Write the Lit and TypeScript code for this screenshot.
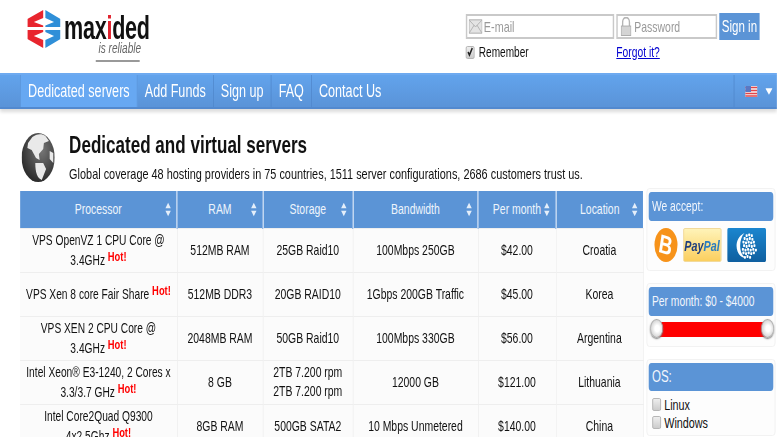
import { LitElement, html, css, svg } from "lit";
import { customElement } from "lit/decorators.js";

const rows: [string, boolean, string, string, string, string, string][] = [
  ["VPS OpenVZ 1 CPU Core @ 3.4GHz", true, "512MB RAM", "25GB Raid10", "100Mbps 250GB", "$42.00", "Croatia"],
  ["VPS Xen 8 core Fair Share", true, "512MB DDR3", "20GB RAID10", "1Gbps 200GB Traffic", "$45.00", "Korea"],
  ["VPS XEN 2 CPU Core @ 3.4GHz", true, "2048MB RAM", "50GB Raid10", "100Mbps 330GB", "$56.00", "Argentina"],
  ["Intel Xeon® E3-1240, 2 Cores x 3.3/3.7 GHz", true, "8 GB", "2TB 7.200 rpm\n2TB 7.200 rpm", "12000 GB", "$121.00", "Lithuania"],
  ["Intel Core2Quad Q9300 4x2.5Ghz", true, "8GB RAM", "500GB SATA2", "10 Mbps Unmetered", "$140.00", "China"],
];
const heads = ["Processor", "RAM", "Storage", "Bandwidth", "Per month", "Location"];
const colW = [218, 119, 125, 174, 108, 121];

const sortIcon = svg`<svg class="sort" viewBox="0 0 10 18" width="11" height="15"><path d="M5 1 9.500 7.500H.5Z M5 17 .5 10.500H9.500Z" fill="#e4eefa"/></svg>`;

/* White dots forming the WebMoney globe */
const wmDots: [number, number][] = [];
for (let a = 0; a < 6; a++) {
  for (let b = 0; b < 7; b++) {
    const x = 22 + a * 3.6 + (b % 2) * 1.2 - 0.4 * b;
    const y = 5.500 + b * 3.6 + (a % 2) * 0.8;
    const dx = x - 27, dy = y - 17;
    if (dx * dx + dy * dy < 150) wmDots.push([x, y]);
  }
}

@customElement("app-root")
export class AppRoot extends LitElement {
  static styles = css`
    :host { display: block; width: 777px; height: 437px; overflow: hidden; background: #fff; }
    .page { width: 1079px; height: 437px; transform: scaleX(.72); transform-origin: 0 0; font-family: "Liberation Sans", Arial, sans-serif; color: #111; font-size: 14px; filter: blur(.35px); }
    header { height: 73px; display: flex; justify-content: space-between; box-sizing: border-box; padding: 10px 0 0 38px; }
    .logo { display: flex; gap: 5px; height: 54px; }
    .wordmark { display: flex; flex-direction: column; align-items: flex-end; width: 122px; }
    .name { font-size: 34px; font-weight: 700; line-height: 28px; color: #111; margin-top: 3px; width: 122px; white-space: nowrap; letter-spacing: -.4px; transform: scaleX(.88); transform-origin: 0 0; }
    .name b { color: #e0242f; }
    .tag { font-size: 14px; font-style: italic; line-height: 14px; color: #666; margin-right: 15px; }
    .rule { width: 61px; height: 2px; background: #999; margin: 5px 17px 0 0; }
    .login { width: 432px; padding-top: 3px; }
    .fields { display: flex; gap: 3px; align-items: center; height: 27px; }
    .field { box-sizing: border-box; height: 25px; border: 2px solid #c9c9c9; display: flex; align-items: center; gap: 2px; color: #999; background: #fff; padding-left: 2px; }
    .email { width: 206px; font-size: 15px; } .pass { width: 140px; font-size: 14.500px; gap: 3px; padding-left: 3px; }
    .signin { width: 56px; height: 27px; background: #5b94d6; color: #fff; font-size: 16px; display: flex; align-items: center; justify-content: center; }
    .remember { display: flex; font-size: 14px; margin-top: 2px; height: 20px; align-items: center; }
    .rem { width: 209px; display: flex; align-items: center; gap: 6px; }
    .box { width: 12px; height: 13px; box-sizing: border-box; border: 1px solid #aaa; border-radius: 2px; background: linear-gradient(#eee, #ccc); display: inline-flex; align-items: center; justify-content: center; flex: none; }
    .forgot { color: #0000d0; text-decoration: underline; font-size: 14.300px; }
    nav { height: 36px; box-sizing: border-box; background: linear-gradient(#62a3ec, #5a93d8); border-top: 2px solid #6eaaf0; border-bottom: 2px solid #5289cf; display: flex; padding-left: 28px; box-shadow: 0 3px 4px rgba(0,0,0,.14); position: relative; }
    .item { color: #fff; font-size: 17.500px; padding: 1px 10px 0; display: flex; align-items: center; border-right: 1px solid #4f86cb; }
    .item.active { background: #67a8f2; border: 1px solid #5b94d8; border-width: 0 1px; }
    .item.last { border: 0; }
    .lang { margin-left: auto; width: 60px; border-left: 1px solid #4f86cb; display: flex; align-items: center; gap: 11px; padding-left: 15px; box-sizing: border-box; }
    .title { height: 82px; box-sizing: border-box; display: flex; padding: 23px 0 0 30px; gap: 20px; }
    h1 { font-size: 23.700px; margin: 0; line-height: 26px; color: #111; }
    .title p { margin: 7px 0 0; font-size: 15.150px; line-height: 18px; white-space: nowrap; }
    .main { display: flex; padding-left: 28px; gap: 4px; }
    table { border-collapse: collapse; table-layout: fixed; width: 865px; flex: none; }
    th { background: #5b94d6; color: #eef4fc; font-weight: 400; height: 37px; font-size: 14.500px; position: relative; padding: 0; border-right: 2px solid #86b0e3; box-sizing: border-box; }
    th:last-child { border-right: 0; }
    .sort { position: absolute; right: 6px; top: 11px; }
    td { background: #fbfbfb; height: 44px; padding: 0 8px; box-sizing: border-box; text-align: center; line-height: 19px; font-size: 14.500px; border: 1px solid #eee; white-space: pre-line; }
    td:first-child { line-height: 20px; font-size: 14.200px; border-left: 0; }
    .hot { color: #f00; font-weight: 700; font-size: 13px; vertical-align: 4px; line-height: 0; }
    aside { width: 179px; display: flex; flex-direction: column; gap: 12px; margin-top: -3px; }
    .panel { border: 1px solid #f0f0f0; border-radius: 4px; padding: 3px 2px; background: #fdfdfd; }
    .ph { background: #5b94d6; color: #f2f6fc; border-radius: 4px; height: 28.500px; display: flex; align-items: center; font-size: 14.300px; padding-left: 5px; }
    .ph.big { font-size: 16px; }
    .pays { display: flex; align-items: center; gap: 8px; padding: 7.500px 0 5px 8px; }
    .btc { width: 32px; height: 34px; border-radius: 50%; background: #f7931a; color: #fff; font-weight: 700; font-size: 26px; display: flex; align-items: center; justify-content: center; }
    .btc span { transform: rotate(12deg); }
    .pp { width: 53px; height: 34px; box-sizing: border-box; border: 1px solid #f0d48a; background: linear-gradient(#fff3b8, #fbcf5f); color: #1f3f7f; font-style: italic; font-weight: 700; font-size: 15px; display: flex; align-items: center; justify-content: center; border-radius: 2px; }
    .pp i { color: #2a7cc0; }
    .slider { position: relative; height: 19px; margin: 3px -1px 5px 2px; }
    .track { position: absolute; left: 9px; right: 9px; top: 3px; height: 15px; background: #f00; }
    .knob { position: absolute; top: 0; width: 18px; height: 19px; border-radius: 50%; background: radial-gradient(circle at 55% 50%, #fff 25%, #bbb); border: 1px solid #aaa; box-sizing: border-box; box-shadow: 0 1px 2px #777; }
    .knob.left { left: 0; }
    .knob.right { right: 0; }
    .os { padding: 4px 3px 0 5px; font-size: 15px; }
    .os div { display: flex; align-items: center; gap: 5px; height: 18.500px; }
  `;

  render() {
    return html`<div class="page">
      <header>
        <div class="logo">
          <svg width="46" height="38" viewBox="0 0 46 38">
            <path d="M0 9 22 0V8L9 12 22 15.500V17H0Z M0 20H22V22L9 26 22 30V38L0 29Z" fill="#e8252e"/>
            <path d="M25 0 46 9V17H25V15.500L37 12 25 8Z M25 20H46V29L25 38V30L37 26 25 22Z" fill="#2f8fd8"/>
          </svg>
          <div class="wordmark">
            <div class="name">max<b>i</b>ded</div>
            <div class="tag">is reliable</div>
            <div class="rule"></div>
          </div>
        </div>
        <div class="login">
          <div class="fields">
            <div class="field email">
              <svg width="19" height="15" viewBox="0 0 20 15"><rect x=".5" y=".5" width="19" height="14" fill="#e4e4e4" stroke="#aaa"/><path d="M1 1 10 8 19 1M1 14 8 6M19 14 12 6" fill="none" stroke="#aaa"/></svg>
              E-mail
            </div>
            <div class="field pass">
              <svg width="17" height="20" viewBox="0 0 18 20"><path d="M4 9V5a5 5 0 0 1 10 0v4" fill="none" stroke="#b5b5b5" stroke-width="2"/><rect x="2" y="9" width="14" height="10" fill="#d4d4d4" stroke="#aaa"/></svg>
              Password
            </div>
            <div class="signin">Sign in</div>
          </div>
          <div class="remember">
            <div class="rem"><span class="box"><svg width="10" height="10" viewBox="0 0 10 10"><path d="M2 5 4 8 8 1" fill="none" stroke="#222" stroke-width="2"/></svg></span>Remember</div>
            <a class="forgot">Forgot it?</a>
          </div>
        </div>
      </header>
      <nav>
        <div class="item active">Dedicated servers</div>
        <div class="item">Add Funds</div>
        <div class="item">Sign up</div>
        <div class="item">FAQ</div>
        <div class="item last">Contact Us</div>
        <div class="lang">
          <svg width="17" height="11" viewBox="0 0 17 11"><rect width="17" height="11" fill="#f4f4f4"/><path d="M0 1.500H17M0 4.500H17M0 7.500H17M0 10H17" stroke="#e2454a" stroke-width="1.500"/><rect width="8" height="6" fill="#5a78c4"/></svg>
          <svg width="10" height="7" viewBox="0 0 11 7"><path d="M0 0H11L5.500 7Z" fill="#fff"/></svg>
        </div>
      </nav>
      <div class="title">
        <svg width="46" height="49" viewBox="0 0 46 49" style="margin-top:1px">
          <defs><radialGradient id="g" cx=".6" cy=".35" r=".75"><stop offset="0" stop-color="#777"/><stop offset="1" stop-color="#222"/></radialGradient></defs>
          <ellipse cx="23" cy="24.500" rx="23" ry="24.500" fill="url(#g)"/>
          <path d="M15 4C20 1 28 0 33 3L38 8 31 10 30 16 24 21 25 27 20 25 14 17 8 15 9 10Z M19 30 30 30 34 36 28 47C22 45 19 40 19 30Z M39 18 44 20 44 30 39 26Z" fill="#e9e9e9"/>
        </svg>
        <div>
          <h1>Dedicated and virtual servers</h1>
          <p>Global coverage 48 hosting providers in 75 countries, 1511 server configurations, 2686 customers trust us.</p>
        </div>
      </div>
      <div class="main">
        <table>
          <colgroup>${colW.map((w) => html`<col style="width:${w}px" />`)}</colgroup>
          <thead><tr>${heads.map((h) => html`<th>${h}${sortIcon}</th>`)}</tr></thead>
          <tbody>
            ${rows.map((r) => html`<tr>
              <td>${r[0]}${r[1] ? html` <sup class="hot">Hot!</sup>` : ""}</td>
              ${r.slice(2).map((c) => html`<td>${c}</td>`)}
            </tr>`)}
          </tbody>
        </table>
        <aside>
          <div class="panel">
            <div class="ph">We accept:</div>
            <div class="pays">
              <div class="btc"><span>B</span></div>
              <div class="pp">Pay<i>Pal</i></div>
              <svg width="54" height="34" viewBox="0 0 54 34">
                <defs><linearGradient id="w" x1="0" y1="0" x2="0" y2="1"><stop offset="0" stop-color="#1b86cf"/><stop offset="1" stop-color="#0f5f9f"/></linearGradient></defs>
                <rect width="54" height="34" rx="2" fill="url(#w)"/>
                <path d="M24 5C16 8 13 13 13 18c0 7 6 12 13 12-5-2-8-6-8-12 0-5 2-10 6-13Z" fill="#fff"/>
                ${wmDots.map(([x, y]) => svg`<rect x=${x} y=${y} width="2.800" height="2.800" rx=".8" fill="#fff"/>`)}
              </svg>
            </div>
          </div>
          <div class="panel">
            <div class="ph">Per month: $0 - $4000</div>
            <div class="slider"><div class="track"></div><div class="knob left"></div><div class="knob right"></div></div>
          </div>
          <div class="panel">
            <div class="ph big">OS:</div>
            <div class="os">
              <div><span class="box"></span>Linux</div>
              <div><span class="box"></span>Windows</div>
            </div>
          </div>
        </aside>
      </div>
    </div>`;
  }
}
